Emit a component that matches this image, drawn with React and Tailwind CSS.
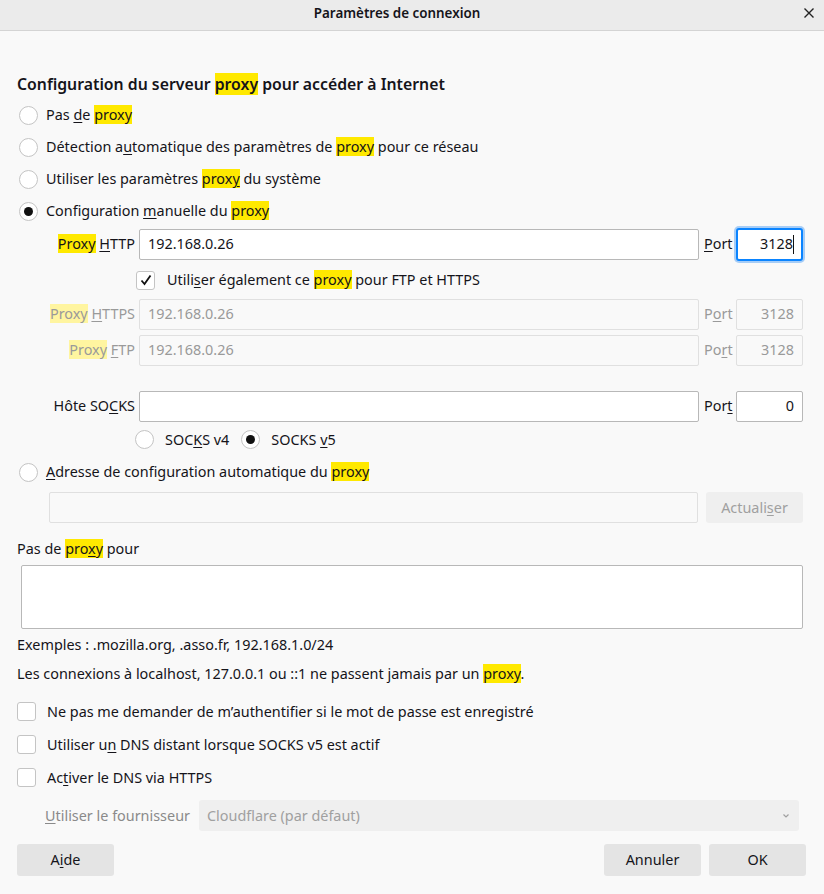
import { useState } from 'react';

const Hl = ({ children, dim }) => (
  <span className={dim ? 'bg-[#fff5a0]' : 'bg-[#ffe900]'}>{children}</span>
);

const Key = ({ children }) => <span className="underline underline-offset-2">{children}</span>;

const Radio = ({ checked }) => (
  <span className="w-[19px] h-[19px] shrink-0 rounded-full border border-[#c4c4c4] bg-white flex items-center justify-center">
    {checked && <span className="w-[9px] h-[9px] rounded-full bg-[#111]" />}
  </span>
);

const Check = ({ checked }) => (
  <span className="w-[19px] h-[19px] shrink-0 rounded-[3px] border border-[#c4c4c4] bg-white flex items-center justify-center">
    {checked && (
      <svg width="14" height="14" viewBox="0 0 14 14">
        <path d="M2.5 7.5 L5.5 11 L11.5 2.5" fill="none" stroke="#111" strokeWidth="1.8" />
      </svg>
    )}
  </span>
);

const Field = ({ value, disabled, className = '', right }) => (
  <div
    className={`h-[31px] flex items-center px-[8px] rounded-[2px] border ${
      disabled ? 'border-[#e0e0e0] bg-[#f9f9f9] text-[#9a9a9a]' : 'border-[#b8b8b8] bg-white text-[#15141a]'
    } ${right ? 'justify-end' : ''} ${className}`}
  >
    {value}
  </div>
);

const ProxyRow = ({ label, value, port, disabled, focused, portKey }) => (
  <div className="h-[32px] flex items-center">
    <div className={`w-[122px] text-right pr-[4px] ${disabled ? 'text-[#9a9a9a]' : ''}`}>{label}</div>
    <Field value={value} disabled={disabled} className="w-[560px]" />
    <div className={`w-[37px] pl-[5px] ${disabled ? 'text-[#9a9a9a]' : ''}`}>{portKey}</div>
    {focused ? (
      <div className="w-[67px] h-[33px] rounded-[3px] border-2 border-[#0a84ff] ring-2 ring-[#a6cdf7] bg-white flex items-center justify-end pr-[7px]">
        {port}
        <span className="w-px h-[19px] bg-[#111]" />
      </div>
    ) : (
      <Field value={port} disabled={disabled} right className="w-[67px]" />
    )}
  </div>
);

export default function App() {
  const [mode] = useState('manual');

  return (
    <div className="w-[824px] h-[894px] bg-[#f9f9f9] text-[#15141a] text-[14.4px] font-['Noto_Sans',sans-serif] overflow-hidden">
      <header className="h-[31px] pb-[3px] pr-[30px] bg-[#ebebeb] border-b border-[#d4d4d4] flex items-center justify-center relative">
        <span className="font-semibold text-[13.4px]">Paramètres de connexion</span>
        <svg className="absolute right-[9px] top-[7px]" width="12" height="12" viewBox="0 0 12 12">
          <path d="M1.5 1.5 L10.5 10.5 M10.5 1.5 L1.5 10.5" stroke="#222" strokeWidth="1.4" />
        </svg>
      </header>

      <div className="px-[17px]">
        <h1 className="mt-[42px] h-[22px] leading-[22px] text-[15.8px] font-semibold">
          Configuration du serveur <Hl>proxy</Hl> pour accéder à Internet
        </h1>

        <div className="mt-[4px]">
          {[
            ['none', <>Pas <Key>d</Key>e <Hl>proxy</Hl></>],
            ['auto', <>Détection a<Key>u</Key>tomatique des paramètres de <Hl>proxy</Hl> pour ce réseau</>],
            ['system', <>Utiliser les paramètres <Hl>prox<Key>y</Key></Hl> du système</>],
            ['manual', <>Configuration <Key>m</Key>anuelle du <Hl>proxy</Hl></>],
          ].map(([id, label]) => (
            <label key={id} className="h-[32px] flex items-center gap-[8px] pl-[2px]">
              <Radio checked={mode === id} />
              <span>{label}</span>
            </label>
          ))}
        </div>

        <div className="mt-[1px]">
          <ProxyRow
            label={<><Hl>Proxy</Hl> <Key>H</Key>TTP</>}
            value="192.168.0.26"
            port="3128"
            focused
            portKey={<><Key>P</Key>ort</>}
          />
          <label className="mt-[4px] h-[32px] flex items-center gap-[12px] pl-[119px]">
            <Check checked />
            <span>
              Utili<Key>s</Key>er également ce <Hl>proxy</Hl> pour FTP et HTTPS
            </span>
          </label>
          <div className="mt-[2px]">
            <ProxyRow
              label={<><Hl dim>Proxy</Hl> <Key>H</Key>TTPS</>}
              value="192.168.0.26"
              port="3128"
              disabled
              portKey={<>P<Key>o</Key>rt</>}
            />
          </div>
          <div className="mt-[4px]">
            <ProxyRow
              label={<><Hl dim>Proxy</Hl> <Key>F</Key>TP</>}
              value="192.168.0.26"
              port="3128"
              disabled
              portKey={<>Po<Key>r</Key>t</>}
            />
          </div>
          <div className="mt-[24px]">
            <ProxyRow
              label={<>Hôte SO<Key>C</Key>KS</>}
              value=""
              port="0"
              portKey={<>Por<Key>t</Key></>}
            />
          </div>
          <div className="mt-[2px] h-[32px] flex items-center pl-[118px]">
            <label className="flex items-center gap-[11px]">
              <Radio />
              <span>SOC<Key>K</Key>S v4</span>
            </label>
            <label className="flex items-center gap-[11px] ml-[12px]">
              <Radio checked />
              <span>SOCKS <Key>v</Key>5</span>
            </label>
          </div>
        </div>

        <label className="h-[32px] flex items-center gap-[8px] pl-[2px]">
          <Radio />
          <span>
            <Key>A</Key>dresse de configuration automatique du <Hl>proxy</Hl>
          </span>
        </label>

        <div className="mt-[4px] flex items-center pl-[32px]">
          <Field value="" disabled className="w-[649px]" />
          <button className="ml-[8px] w-[97px] h-[31px] rounded-[3px] bg-[#efefef] text-[#a0a0a0]">
            Actuali<Key>s</Key>er
          </button>
        </div>

        <div className="mt-[15px] h-[22px] leading-[22px]">
          Pas de <Hl>pro<Key>x</Key>y</Hl> pour
        </div>
        <div className="mt-[5px] ml-[4px] w-[782px] h-[64px] rounded-[2px] border border-[#b8b8b8] bg-white" />

        <div className="mt-[5px] h-[22px] leading-[22px]">Exemples : .mozilla.org, .asso.fr, 192.168.1.0/24</div>
        <div className="mt-[7px] h-[22px] leading-[22px]">
          Les connexions à localhost, 127.0.0.1 ou ::1 ne passent jamais par un <Hl>proxy</Hl>.
        </div>

        <div className="mt-[10px]">
          {[
            <>Ne pas me demander de m’authentifier si le mot de passe est enre<Key>g</Key>istré</>,
            <>Utiliser u<Key>n</Key> DNS distant lorsque SOCKS v5 est actif</>,
            <>Ac<Key>t</Key>iver le DNS via HTTPS</>,
          ].map((label, i) => (
            <label key={i} className="h-[33px] flex items-center gap-[11px]">
              <Check />
              <span>{label}</span>
            </label>
          ))}
        </div>

        <div className="mt-[6px] flex items-center">
          <span className="w-[174px] pl-[28px] whitespace-nowrap text-[#8a8a8a]">
            <Key>U</Key>tiliser le fournisseur
          </span>
          <div className="ml-[8px] w-[600px] h-[31px] rounded-[3px] bg-[#efefef] text-[#a0a0a0] flex items-center justify-between px-[8px]">
            <span>Cloudflare (par défaut)</span>
            <svg width="10" height="10" viewBox="0 0 10 10">
              <path d="M2.5 3.5 L5 6 L7.5 3.5" fill="none" stroke="#a0a0a0" strokeWidth="1.2" />
            </svg>
          </div>
        </div>

        <div className="mt-[13px] flex items-center">
          <button className="w-[97px] h-[32px] rounded-[3px] bg-[#e4e4e4]">
            A<Key>i</Key>de
          </button>
          <button className="ml-auto w-[97px] h-[32px] rounded-[3px] bg-[#e4e4e4]">Annuler</button>
          <button className="ml-[8px] mr-[1px] w-[97px] h-[32px] rounded-[3px] bg-[#e4e4e4]">OK</button>
        </div>
      </div>
    </div>
  );
}
